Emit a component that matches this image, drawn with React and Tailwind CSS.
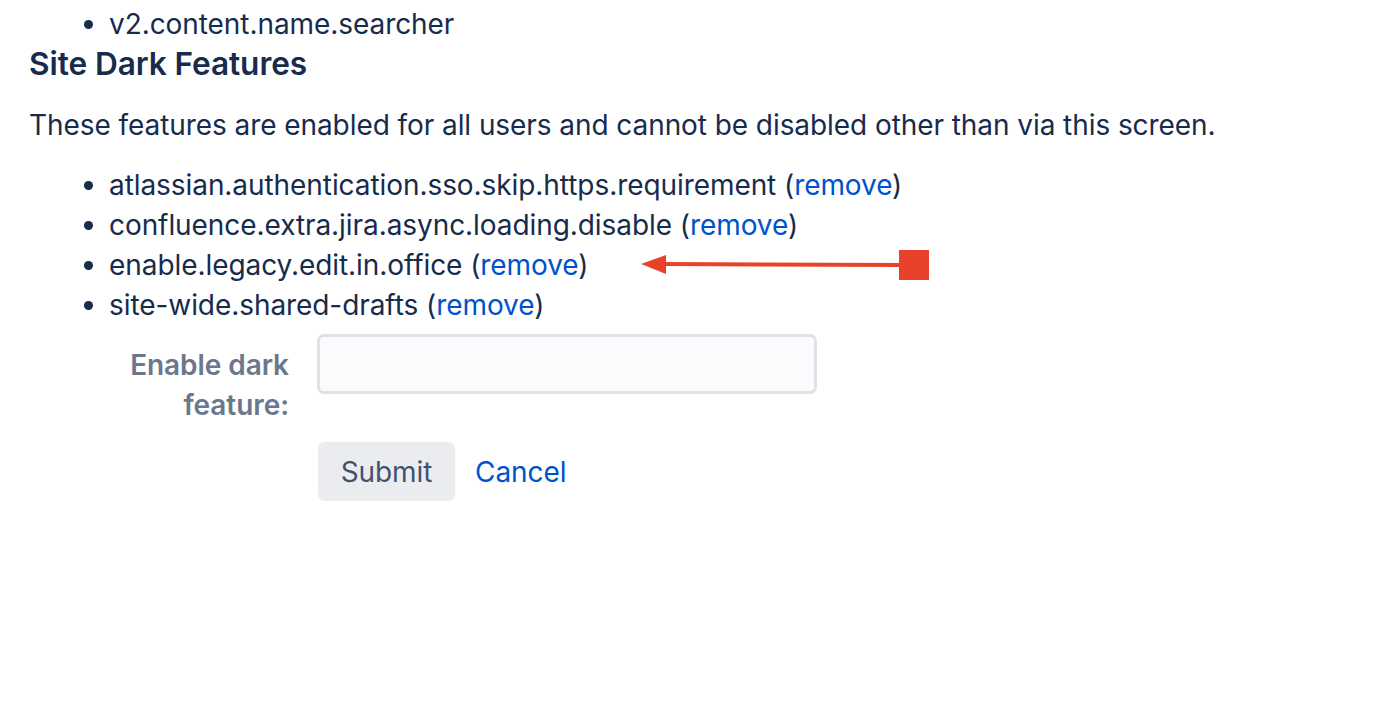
import React from 'react';

const features = [
  'atlassian.authentication.sso.skip.https.requirement',
  'confluence.extra.jira.async.loading.disable',
  'enable.legacy.edit.in.office',
  'site-wide.shared-drafts',
];

const Arrow = () => (
  <svg width="300" height="32" viewBox="0 0 300 32" className="absolute left-[531px] top-[4px]">
    <line x1="20" y1="15" x2="260" y2="16" stroke="#E8432A" strokeWidth="4" />
    <polygon points="1,15 26,6 26,25" fill="#E8432A" />
    <rect x="259" y="1" width="30" height="30" fill="#E8432A" />
  </svg>
);

export default function App() {
  return (
    <div className="min-h-screen bg-white text-[#172B4D] font-['Inter',sans-serif] text-[28px] leading-[40px] tracking-[-0.07px] pl-[29px] pt-[4px]">
      <ul className="list-disc pl-[80px]">
        <li>v2.content.name.searcher</li>
      </ul>
      <h2 className="text-[31.6px] font-semibold leading-[40px]">Site Dark Features</h2>
      <p className="mt-[21px]">These features are enabled for all users and cannot be disabled other than via this screen.</p>
      <ul className="list-disc pl-[80px] mt-[20px]">
        {features.map(f => (
          <li key={f} className="relative">
            {f} (<a href="#" className="text-[#0052CC]">remove</a>)
            {f === 'enable.legacy.edit.in.office' && <Arrow />}
          </li>
        ))}
      </ul>
      <form className="mt-[9px]">
        <div className="flex items-start">
          <label className="w-[260px] text-right font-semibold text-[#6B778C] leading-[40px] mt-[11px]">
            Enable dark<br />feature:
          </label>
          <input
            type="text"
            className="ml-[28px] w-[500px] h-[60px] bg-[#FAFBFC] border-[3px] border-[#DFE1E6] rounded-[7px]"
          />
        </div>
        <div className="flex items-center mt-[17px] ml-[289px] gap-[20px]">
          <button type="button" className="w-[137px] h-[59px] bg-[#EBECF0] text-[#42526E] rounded-[6px]">Submit</button>
          <a href="#" className="text-[#0052CC]">Cancel</a>
        </div>
      </form>
    </div>
  );
}
